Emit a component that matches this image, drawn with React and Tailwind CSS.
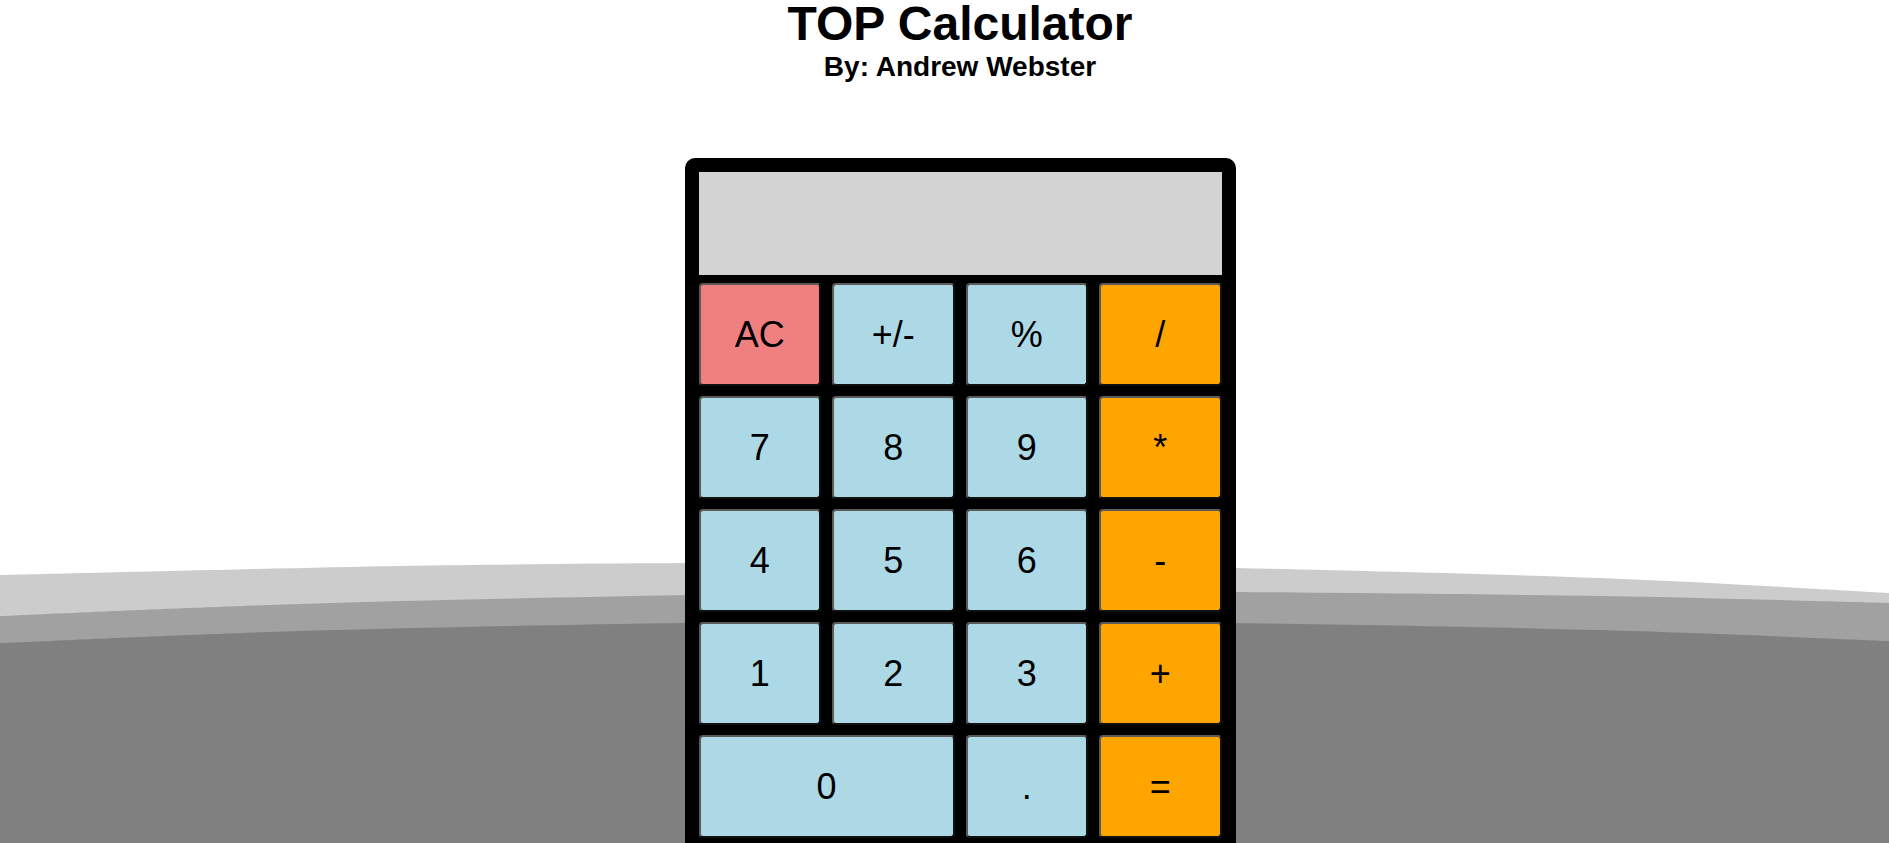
import React from 'react';

// background hills, sampled from the reference
const hills = [
    { fill: '#cccccc', pts: [[0, 575], [400, 566], [685, 563], [950, 562], [1236, 568], [1600, 578], [1889, 593]] },
    { fill: '#a1a1a1', pts: [[0, 616], [300, 604], [685, 595], [1000, 591], [1236, 592], [1600, 596], [1889, 603]] },
    { fill: '#808080', pts: [[0, 643], [300, 631], [685, 623], [1000, 621], [1236, 623], [1600, 630], [1889, 641]] },
];

const smoothPath = (pts) => {
    let d = `M${pts[0][0]} ${pts[0][1]}`;
    for (let i = 0; i < pts.length - 1; i++) {
        const p0 = pts[i - 1] || pts[i];
        const p1 = pts[i];
        const p2 = pts[i + 1];
        const p3 = pts[i + 2] || p2;
        const c1 = [p1[0] + (p2[0] - p0[0]) / 6, p1[1] + (p2[1] - p0[1]) / 6];
        const c2 = [p2[0] - (p3[0] - p1[0]) / 6, p2[1] - (p3[1] - p1[1]) / 6];
        d += ` C${c1[0]} ${c1[1]} ${c2[0]} ${c2[1]} ${p2[0]} ${p2[1]}`;
    }
    return d + ' L1889 843 L0 843 Z';
};

const keys = [
    { label: 'AC', color: 'bg-[#f08080]' },
    { label: '+/-' },
    { label: '%' },
    { label: '/', color: 'bg-[#ffa500]' },
    { label: '7' },
    { label: '8' },
    { label: '9' },
    { label: '*', color: 'bg-[#ffa500]' },
    { label: '4' },
    { label: '5' },
    { label: '6' },
    { label: '-', color: 'bg-[#ffa500]' },
    { label: '1' },
    { label: '2' },
    { label: '3' },
    { label: '+', color: 'bg-[#ffa500]' },
    { label: '0', wide: true },
    { label: '.' },
    { label: '=', color: 'bg-[#ffa500]' },
];

const App = () => {
    return (
        <div className="relative h-screen overflow-hidden bg-white font-['Liberation_Sans',Arial,sans-serif]">
            <svg className="absolute inset-0 h-full w-full" viewBox="0 0 1889 843" preserveAspectRatio="none">
                {hills.map((h, i) => (
                    <path key={i} d={smoothPath(h.pts)} fill={h.fill} />
                ))}
            </svg>

            <div className="relative flex flex-col items-center pl-[31px]">
                <h1 className="text-[48px] font-bold leading-none text-black">TOP Calculator</h1>
                <h2 className="mt-[5px] text-[28px] font-bold leading-none text-black">By: Andrew Webster</h2>

                <div className="mt-[77px] w-[551px] rounded-[10px] border-[14px] border-black bg-black">
                    <div className="h-[103px] bg-[#d3d3d3]"></div>
                    <div className="mt-[8px] grid grid-cols-4 gap-x-[11px] gap-y-[10px] pb-[10px]">
                        {keys.map((k) => (
                            <button
                                key={k.label}
                                className={`flex h-[103px] items-center justify-center rounded-[4px] border-2 border-t-[#5a5a5a] border-l-[#5a5a5a] border-r-[#111] border-b-[#111] text-[36px] text-black ${k.color || 'bg-[#add8e6]'} ${k.wide ? 'col-span-2' : ''}`}
                            >
                                {k.label}
                            </button>
                        ))}
                    </div>
                </div>
            </div>
        </div>
    );
};

export default App;
